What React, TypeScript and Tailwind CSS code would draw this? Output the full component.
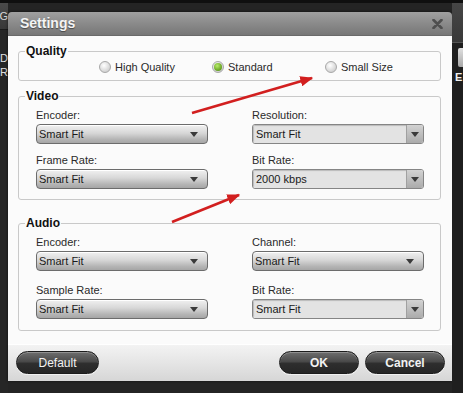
import React from "react";

function Tri() {
  return (
    <svg width="8" height="5" viewBox="0 0 8 5" className="shrink-0">
      <path d="M0 0 L8 0 L4 5 Z" fill="#3a3a3a" />
    </svg>
  );
}

function GradSelect({ value }: { value: string }) {
  return (
    <div className="h-[20px] rounded-[4px] border border-[#6c6c6c] bg-[linear-gradient(#f1f1f1,#d7d7d7_45%,#b4b4b4_80%,#a6a6a6)] shadow-[inset_0_1px_0_#ffffff] flex items-center pl-[2px] pr-[9px] text-[11px] text-[#1a1a1a]">
      <span className="flex-1 leading-none">{value}</span>
      <Tri />
    </div>
  );
}

function FlatSelect({ value }: { value: string }) {
  return (
    <div className="h-[20px] rounded-[3px] border border-[#858585] flex overflow-hidden text-[11px] text-[#1a1a1a]">
      <div className="flex-1 bg-[#e3e3e3] shadow-[inset_1px_1px_1px_rgba(0,0,0,0.18)] flex items-center pl-[3px] leading-none">
        {value}
      </div>
      <div className="w-[17px] bg-[linear-gradient(#d2d2d2,#ababab)] border-l border-[#a0a0a0] flex items-center justify-center">
        <Tri />
      </div>
    </div>
  );
}

function Field({
  label,
  children,
  mt,
}: {
  label: string;
  children: React.ReactNode;
  mt: string;
}) {
  return (
    <div className={"flex flex-col " + mt}>
      <div className="h-[14px] leading-[14px] text-[11px] text-[#2a2a2a]">{label}</div>
      <div className="mt-[2px]">{children}</div>
    </div>
  );
}

function Radio({ label, checked }: { label: string; checked?: boolean }) {
  return (
    <div className="w-[113px] flex items-center gap-[4px]">
      <span className="w-[12px] h-[12px] rounded-full border border-[#a8a8a8] bg-[radial-gradient(circle_at_40%_35%,#ffffff,#d4d4d4_70%,#c4c4c4)] flex items-center justify-center">
        {checked && (
          <span className="w-[8px] h-[8px] rounded-full bg-[radial-gradient(circle_at_40%_35%,#b8ec6c,#6faa28_60%,#4d8416)]" />
        )}
      </span>
      <span className="text-[11px] text-[#2a2a2a] leading-none">{label}</span>
    </div>
  );
}

function Legend({ children }: { children: React.ReactNode }) {
  return (
    <legend className="ml-[6px] px-[1px] text-[12px] font-bold leading-[14px] text-[#111]">
      {children}
    </legend>
  );
}

function PillButton({
  children,
  w,
  bold,
}: {
  children: React.ReactNode;
  w: string;
  bold?: boolean;
}) {
  return (
    <div
      className={
        "h-[23px] rounded-full border border-[#1c1c1c] bg-[linear-gradient(#6e6e6e,#4a4a4a_45%,#2e2e2e_55%,#262626)] shadow-[inset_0_1px_0_rgba(255,255,255,0.25),0_1px_0_rgba(255,255,255,0.6)] flex items-center justify-center text-[12px] text-[#f2f2f2] " +
        w +
        (bold ? " font-bold" : "")
      }
    >
      {children}
    </div>
  );
}

export default function App() {
  return (
    <div className="relative w-[463px] h-[393px] bg-[#242424] flex flex-col font-['Liberation_Sans',Arial,sans-serif] overflow-hidden">
      <div className="h-[3px] bg-[#0f0f0f]" />
      <div className="flex flex-1">
        {/* left background strip */}
        <div className="w-[8px] flex flex-col overflow-hidden">
          <div className="h-[27px] bg-[linear-gradient(#4a4a4a,#383838)] flex items-center justify-end text-[11px] text-[#d8d8d8] whitespace-nowrap border-b border-[#1a1a1a]">
            IG
          </div>
          <div className="flex-1 bg-[#262626] pt-[21px] text-[11px] leading-[14px] text-[#e0e0e0]">
            <div>D</div>
            <div>R</div>
          </div>
        </div>

        {/* dialog */}
        <div className="w-[444px] pt-[9px] flex flex-col">
          <div className="h-[369px] rounded-t-[4px] overflow-hidden flex flex-col shadow-[0_0_3px_rgba(0,0,0,0.6)]">
            <div className="h-[24px] bg-[linear-gradient(#a0a0a0,#8a8a8a_50%,#777777)] flex items-center pl-[12px] pr-[9px] border-b border-[#6a6a6a]">
              <span className="flex-1 text-[14px] font-bold text-[#f4f4f4] [text-shadow:0_1px_1px_rgba(0,0,0,0.45)]">
                Settings
              </span>
              <svg width="11" height="10" viewBox="0 0 11 10">
                <path d="M1.5 1 L9.5 9 M9.5 1 L1.5 9" stroke="#4e4e4e" strokeWidth="2.6" strokeLinecap="round" />
              </svg>
            </div>

            <div className="flex-1 bg-[#fbfbfb] pt-[8px] pl-[10px] pr-[11px] flex flex-col">
              <fieldset className="border border-[#c9c9c9] rounded-[3px]">
                <Legend>Quality</Legend>
                <div className="h-[18px] flex items-center pl-[80px]">
                  <Radio label="High Quality" />
                  <Radio label="Standard" checked />
                  <Radio label="Small Size" />
                </div>
                <div className="h-[4px]" />
              </fieldset>

              <fieldset className="mt-[8px] border border-[#c9c9c9] rounded-[3px]">
                <Legend>Video</Legend>
                <div className="pt-[5px] pb-[10px] pl-[17px] grid grid-cols-[172px_172px] gap-x-[44px]">
                  <div className="flex flex-col">
                    <Field label="Encoder:" mt="">
                      <GradSelect value="Smart Fit" />
                    </Field>
                    <Field label="Frame Rate:" mt="mt-[9px]">
                      <GradSelect value="Smart Fit" />
                    </Field>
                  </div>
                  <div className="flex flex-col">
                    <Field label="Resolution:" mt="">
                      <FlatSelect value="Smart Fit" />
                    </Field>
                    <Field label="Bit Rate:" mt="mt-[9px]">
                      <FlatSelect value="2000 kbps" />
                    </Field>
                  </div>
                </div>
              </fieldset>

              <fieldset className="mt-[16px] border border-[#c9c9c9] rounded-[3px]">
                <Legend>Audio</Legend>
                <div className="pt-[5px] pb-[11px] pl-[17px] grid grid-cols-[172px_172px] gap-x-[44px]">
                  <div className="flex flex-col">
                    <Field label="Encoder:" mt="">
                      <GradSelect value="Smart Fit" />
                    </Field>
                    <Field label="Sample Rate:" mt="mt-[12px]">
                      <GradSelect value="Smart Fit" />
                    </Field>
                  </div>
                  <div className="flex flex-col">
                    <Field label="Channel:" mt="">
                      <GradSelect value="Smart Fit" />
                    </Field>
                    <Field label="Bit Rate:" mt="mt-[12px]">
                      <FlatSelect value="Smart Fit" />
                    </Field>
                  </div>
                </div>
              </fieldset>
            </div>

            <div className="h-[37px] border-t border-[#ffffff] bg-[linear-gradient(#f3f3f3,#e2e2e2_60%,#d6d6d6)] flex items-start pt-[6px] pl-[8px] pr-[7px]">
              <PillButton w="w-[83px]">Default</PillButton>
              <div className="flex-1" />
              <PillButton w="w-[80px]" bold>
                OK
              </PillButton>
              <div className="w-[6px]" />
              <PillButton w="w-[80px]" bold>
                Cancel
              </PillButton>
            </div>
          </div>
        </div>

        {/* right background strip */}
        <div className="flex-1 flex flex-col overflow-hidden">
          <div className="h-[40px] bg-[linear-gradient(#464646,#393939)] border-b border-[#555]" />
          <div className="flex-1 bg-[#1f1f1f] pt-[5px] pl-[3px] flex flex-col">
            <div className="ml-[3px] h-[19px] bg-[linear-gradient(#e0e0e0,#a8a8a8)] rounded-l-[2px]" />
            <div className="mt-[4px] text-[11px] font-bold text-[#f0f0f0] leading-[12px]">E</div>
          </div>
        </div>
      </div>

      {/* red annotation arrows */}
      <svg className="absolute inset-0 pointer-events-none" width="463" height="393" viewBox="0 0 463 393">
        <defs>
          <marker id="ah" markerWidth="5" markerHeight="4" refX="4.5" refY="2" orient="auto" markerUnits="strokeWidth">
            <path d="M0 0 L5 2 L0 4 Z" fill="#d21f1f" />
          </marker>
        </defs>
        <line x1="192" y1="113" x2="312" y2="78" stroke="#d21f1f" strokeWidth="2.6" markerEnd="url(#ah)" />
        <line x1="172" y1="222" x2="239" y2="195" stroke="#d21f1f" strokeWidth="2.6" markerEnd="url(#ah)" />
      </svg>
    </div>
  );
}
